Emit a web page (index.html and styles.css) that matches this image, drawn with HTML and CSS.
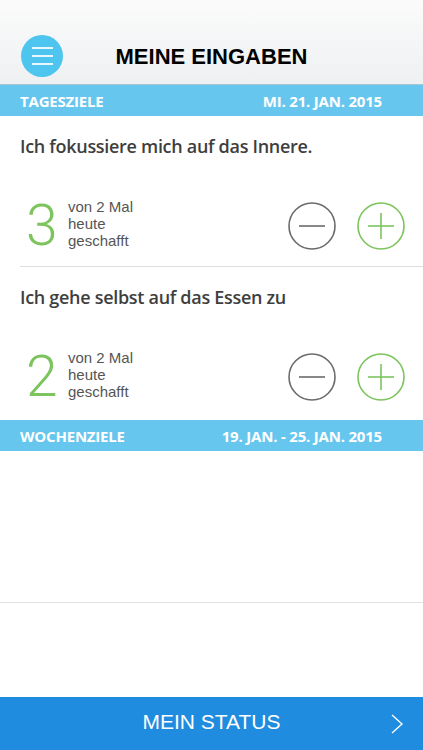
FILE: index.html
```html
<!DOCTYPE html>
<html>
  <head>
    <meta charset="utf-8">
    <title>Meine Eingaben</title>
    <link rel="stylesheet" href="styles.css">
  </head>
  <body>
    <div class="screen">
      <header class="topbar">
        <button class="menu-btn" type="button">
          <span></span><span></span><span></span>
        </button>
        <h1>MEINE EINGABEN</h1>
      </header>

      <main class="content">
        <div class="section-bar">
          <span>TAGESZIELE</span>
          <span>MI. 21. JAN. 2015</span>
        </div>

        <div class="goal">
          <h2 class="goal-title">Ich fokussiere mich auf das Innere.</h2>
          <div class="goal-row">
            <div class="count">3</div>
            <div class="count-text">von 2 Mal<br>heute<br>geschafft</div>
            <div class="controls">
              <button class="round minus" type="button">
                <svg width="48" height="48" viewBox="0 0 48 48"><circle cx="24" cy="24" r="23" fill="none" stroke="#6b6b6b" stroke-width="1.6"/><line x1="11" y1="24" x2="37" y2="24" stroke="#6b6b6b" stroke-width="1.6"/></svg>
              </button>
              <button class="round plus" type="button">
                <svg width="48" height="48" viewBox="0 0 48 48"><circle cx="24" cy="24" r="23" fill="none" stroke="#7cc45d" stroke-width="1.6"/><line x1="11" y1="24" x2="37" y2="24" stroke="#7cc45d" stroke-width="1.6"/><line x1="24" y1="11" x2="24" y2="37" stroke="#7cc45d" stroke-width="1.6"/></svg>
              </button>
            </div>
          </div>
        </div>

        <div class="goal last">
          <h2 class="goal-title">Ich gehe selbst auf das Essen zu</h2>
          <div class="goal-row">
            <div class="count">2</div>
            <div class="count-text">von 2 Mal<br>heute<br>geschafft</div>
            <div class="controls">
              <button class="round minus" type="button">
                <svg width="48" height="48" viewBox="0 0 48 48"><circle cx="24" cy="24" r="23" fill="none" stroke="#6b6b6b" stroke-width="1.6"/><line x1="11" y1="24" x2="37" y2="24" stroke="#6b6b6b" stroke-width="1.6"/></svg>
              </button>
              <button class="round plus" type="button">
                <svg width="48" height="48" viewBox="0 0 48 48"><circle cx="24" cy="24" r="23" fill="none" stroke="#7cc45d" stroke-width="1.6"/><line x1="11" y1="24" x2="37" y2="24" stroke="#7cc45d" stroke-width="1.6"/><line x1="24" y1="11" x2="24" y2="37" stroke="#7cc45d" stroke-width="1.6"/></svg>
              </button>
            </div>
          </div>
        </div>

        <div class="section-bar">
          <span>WOCHENZIELE</span>
          <span>19. JAN. - 25. JAN. 2015</span>
        </div>
        <div class="empty-goal"></div>
      </main>

      <footer class="status-bar">
        <span></span>
        <span class="status-label">MEIN STATUS</span>
        <svg class="chevron" width="12" height="20" viewBox="0 0 12 20"><polyline points="1,1 11,10 1,19" fill="none" stroke="#fff" stroke-width="1.4"/></svg>
      </footer>
    </div>
  </body>
</html>
```

FILE: styles.css
```css
body {
  margin: 0;
  padding: 0;
  font-family: "Liberation Sans", Arial, sans-serif;
  background-color: #fff;
}
.screen {
  display: flex;
  flex-direction: column;
  height: 750px;
}
.topbar {
  height: 85px;
  display: flex;
  align-items: flex-end;
  padding: 0 0 7px 21px;
  box-sizing: border-box;
  background: linear-gradient(#fbfbfb, #eef0f2);
  border-bottom: 1px solid #a8c3d2;
  position: relative;
}
.topbar h1 {
  position: absolute;
  left: 0;
  right: 0;
  bottom: 14px;
  margin: 0;
  text-align: center;
  font-size: 22px;
  font-weight: bold;
  color: #000;
  pointer-events: none;
}
.menu-btn {
  width: 42px;
  height: 42px;
  border-radius: 50%;
  border: none;
  padding: 0;
  background-color: #4dc5ee;
  display: flex;
  flex-direction: column;
  align-items: center;
  justify-content: center;
  gap: 6.5px;
}
.menu-btn span {
  display: block;
  width: 21px;
  height: 1.5px;
  background-color: #e8f7fd;
}
.content {
  flex: 1;
}
.section-bar {
  height: 31px;
  display: flex;
  align-items: center;
  justify-content: space-between;
  padding: 0 41px 0 20px;
  background-color: #66c6ee;
  color: #fff;
  font-family: "Open Sans", sans-serif;
  font-weight: 700;
  font-size: 15px;
  letter-spacing: -0.2px;
}
.goal {
  margin-left: 20px;
  padding: 17px 18px 0 0;
  height: 151px;
  box-sizing: border-box;
  border-bottom: 1px solid #dedede;
}
.goal.last {
  height: 153px;
  border-bottom: none;
}
.goal-title {
  margin: 0;
  font-family: "Open Sans", sans-serif;
  font-weight: 600;
  font-size: 18px;
  letter-spacing: -0.3px;
  color: #3e3e3e;
  line-height: 26px;
}
.goal-row {
  display: flex;
  align-items: center;
  height: 50px;
  margin-top: 42px;
}
.count {
  width: 48px;
  padding-left: 6px;
  box-sizing: border-box;
  font-family: Roboto, sans-serif;
  font-weight: 300;
  font-size: 57px;
  line-height: 50px;
  color: #7cc45d;
}
.count-text {
  margin-top: -6px;
  font-size: 15px;
  line-height: 17px;
  color: #555;
}
.controls {
  margin-left: auto;
  display: flex;
  gap: 21px;
}
.round {
  width: 48px;
  height: 48px;
  border: none;
  padding: 0;
  background: none;
}
.round svg {
  display: block;
}
.empty-goal {
  height: 151px;
  border-bottom: 1px solid #e2e2e2;
}
.status-bar {
  height: 53px;
  display: grid;
  grid-template-columns: 1fr auto 1fr;
  align-items: center;
  background-color: #1f8ce0;
  color: #fff;
}
.status-label {
  padding-bottom: 3px;
  font-size: 21px;
}
.chevron {
  justify-self: end;
  margin-right: 20px;
}
```
